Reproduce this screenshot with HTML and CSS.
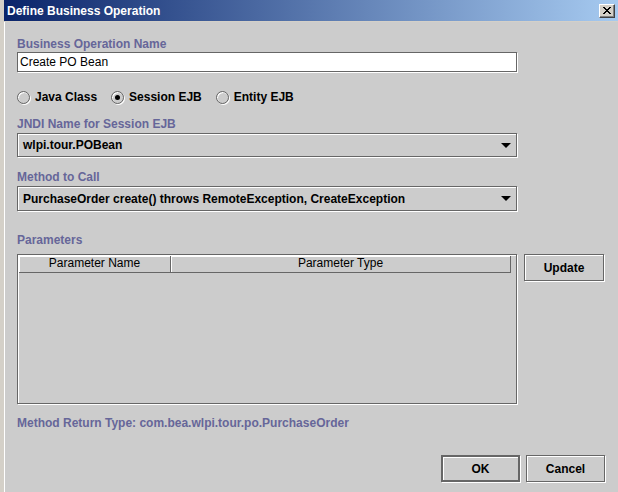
FILE: index.html
```html
<!DOCTYPE html>
<html lang="en">
  <head>
    <meta charset="UTF-8" />
    <title>Define Business Operation</title>
    <link rel="stylesheet" href="styles.css">
  </head>
  <body>
    <div class="window">
      <div class="titlebar">
        <span class="title">Define Business Operation</span>
        <button class="closeBtn" type="button">
          <svg width="8" height="7" viewBox="0 0 8 7">
            <path d="M0 0 L7 7 M1 0 L8 7 M7 0 L0 7 M8 0 L1 7" stroke="#000" stroke-width="1" fill="none" />
          </svg>
        </button>
      </div>

      <div class="content">
        <label class="fieldLabel first">Business Operation Name</label>
        <div class="textField">Create PO Bean</div>

        <div class="radioRow">
          <span class="radioItem"><span class="radio"></span>Java Class</span>
          <span class="radioItem"><span class="radio checked"></span>Session EJB</span>
          <span class="radioItem"><span class="radio"></span>Entity EJB</span>
        </div>

        <label class="fieldLabel jndi">JNDI Name for Session EJB</label>
        <div class="combo">
          <span>wlpi.tour.POBean</span>
          <span class="arrow"></span>
        </div>

        <label class="fieldLabel method">Method to Call</label>
        <div class="combo tall">
          <span>PurchaseOrder create() throws RemoteException, CreateException</span>
          <span class="arrow"></span>
        </div>

        <label class="fieldLabel params">Parameters</label>
        <div class="paramRow">
          <div class="tableBox">
            <div class="tableHead">
              <div class="th nameCol">Parameter Name</div>
              <div class="th typeCol">Parameter Type</div>
            </div>
          </div>
          <button class="btn update" type="button">Update</button>
        </div>

        <label class="fieldLabel returnType">Method Return Type: com.bea.wlpi.tour.po.PurchaseOrder</label>

        <div class="footer">
          <button class="btn default" type="button">OK</button>
          <button class="btn" type="button">Cancel</button>
        </div>
      </div>
    </div>
  </body>
</html>
```

FILE: styles.css
```css
* {
  margin: 0;
  padding: 0;
  box-sizing: border-box;
  font-family: 'Liberation Sans', Arial, sans-serif;
}

body {
  background-color: #d4d0c8;
  width: 618px;
  height: 492px;
  overflow: hidden;
}

.window {
  height: 492px;
  border-left: 4px solid #d4d0c8;
  background-color: #cccccc;
  box-shadow: inset 1px 0 0 #ffffff;
}

.titlebar {
  height: 22px;
  display: flex;
  align-items: center;
  justify-content: space-between;
  padding: 0 3px 0 3px;
  background: linear-gradient(to right, #0a246a, #a6caf0);
  border-bottom: 1px solid #d4d0c8;
}

.title {
  color: #fff;
  font-size: 12px;
  font-weight: bold;
}

.closeBtn {
  width: 16px;
  height: 14px;
  display: flex;
  align-items: center;
  justify-content: center;
  background-color: #d4d0c8;
  border: 1px solid;
  border-color: #fff #404040 #404040 #fff;
  box-shadow: inset -1px -1px 0 #808080;
}

.content {
  display: flex;
  flex-direction: column;
  padding-left: 13px;
}

.fieldLabel {
  display: block;
  font-size: 12px;
  font-weight: bold;
  line-height: 14px;
  color: #666699;
}

.first {
  margin-top: 15px;
}

.textField {
  margin-top: 1px;
  width: 500px;
  height: 20px;
  background-color: #fff;
  border: 1px solid #666;
  box-shadow: 1px 1px 0 #fff;
  font-size: 12px;
  line-height: 18px;
  padding-left: 2px;
}

.radioRow {
  margin-top: 17px;
  height: 16px;
  display: flex;
  align-items: center;
  gap: 14px;
}

.radioItem {
  display: flex;
  align-items: center;
  gap: 5px;
  font-size: 12px;
  font-weight: bold;
}

.radio {
  width: 13px;
  height: 13px;
  border-radius: 50%;
  border: 1px solid #666;
  box-shadow: 1px 1px 0 #fff, inset 1px 1px 0 #fff;
  display: flex;
  align-items: center;
  justify-content: center;
}

.radio.checked::after {
  content: "";
  width: 5px;
  height: 5px;
  border-radius: 50%;
  background-color: #000;
}

.jndi {
  margin-top: 12px;
}

.combo {
  margin-top: 2px;
  width: 500px;
  height: 24px;
  display: flex;
  align-items: center;
  justify-content: space-between;
  padding: 0 5px 0 5px;
  border: 1px solid #666;
  box-shadow: 1px 1px 0 #fff, inset 1px 1px 0 #fff;
  font-size: 12px;
  font-weight: bold;
}

.combo.tall {
  height: 25px;
}

.arrow {
  width: 0;
  height: 0;
  border-left: 5px solid transparent;
  border-right: 5px solid transparent;
  border-top: 5px solid #000;
  margin-right: 0;
}

.method {
  margin-top: 13px;
}

.params {
  margin-top: 22px;
}

.paramRow {
  margin-top: 7px;
  display: flex;
  align-items: flex-start;
  gap: 7px;
}

.tableBox {
  width: 500px;
  height: 150px;
  border: 1px solid #666;
  box-shadow: 1px 1px 0 #fff, inset 1px 1px 0 #fff;
  padding: 1px 5px 0 1px;
}

.tableHead {
  display: flex;
  height: 17px;
  border-right: 1px solid #666;
}

.th {
  font-size: 12px;
  line-height: 15px;
  text-align: center;
  border-bottom: 1px solid #666;
  border-right: 1px solid #666;
  box-shadow: inset 1px 1px 0 #fff;
}

.nameCol {
  width: 152px;
}

.typeCol {
  flex: 1;
  border-right: none;
}

.btn {
  width: 80px;
  height: 27px;
  background-color: #cccccc;
  border: 1px solid #666;
  box-shadow: 1px 1px 0 #fff, inset 1px 1px 0 #fff;
  font-size: 12px;
  font-weight: bold;
  color: #000;
}

.btn.default {
  border: 2px solid #666;
}

.returnType {
  margin-top: 12px;
}

.footer {
  margin-top: 25px;
  display: flex;
  gap: 6px;
  padding-left: 424px;
}

.footer .btn {
  width: 79px;
}
```
